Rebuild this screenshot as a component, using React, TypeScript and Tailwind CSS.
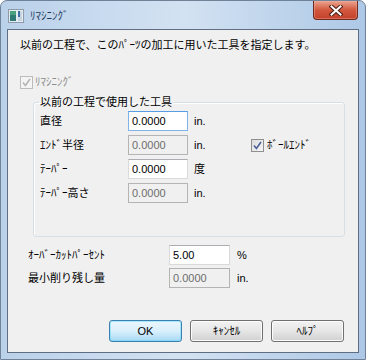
import React from "react";

const ui = "font-['Liberation_Sans','Noto_Sans_CJK_JP',sans-serif]";

function Check({ disabled = false }: { disabled?: boolean }) {
  return (
    <span
      className={`flex h-[13px] w-[13px] shrink-0 items-center justify-center border ${
        disabled ? "border-[#bcbcbc] bg-[#f4f4f4]" : "border-[#8e8f8f] bg-gradient-to-br from-[#dcdcdc] to-[#f6f6f6]"
      }`}
    >
      <svg width="9" height="9" viewBox="0 0 9 9">
        <path
          d="M1 4.6 L3.4 7.4 L8 1"
          fill="none"
          stroke={disabled ? "#b4b4b4" : "#4a5f97"}
          strokeWidth="1.6"
        />
      </svg>
    </span>
  );
}

function Field({ value, disabled = false, focused = false, w = "w-[60px]" }: { value: string; disabled?: boolean; focused?: boolean; w?: string }) {
  return (
    <div
      className={`flex h-[20px] ${w} items-center border px-[3px] text-[11px] ${
        disabled
          ? "border-[#b4b4b4] bg-[#f0f0f0] text-[#6d6d6d]"
          : focused
          ? "border-[#7eb4ea] border-t-[#569de5] bg-white text-black"
          : "border-[#dadada] border-t-[#abadb3] bg-white text-black"
      }`}
    >
      {value}
    </div>
  );
}

function Btn({ label, main = false }: { label: string; main?: boolean }) {
  return (
    <div
      className={`flex h-[22px] w-[73px] items-center justify-center rounded-[3px] border text-[11px] text-black ${
        main
          ? "border-[#3c7fb1] bg-gradient-to-b from-[#eaf6fd] via-[#d9f0fc] to-[#a7d9f5] shadow-[inset_0_0_0_1px_#48d8fb66]"
          : "border-[#707070] bg-gradient-to-b from-[#f2f2f2] via-[#e6e6e6] to-[#d0d0d0] shadow-[inset_0_0_0_1px_#fcfcfc]"
      }`}
    >
      {label}
    </div>
  );
}

const rows = [
  { label: "直径", value: "0.0000", unit: "in.", focused: true },
  { label: "ｴﾝﾄﾞ半径", value: "0.0000", unit: "in.", disabled: true, ball: true },
  { label: "ﾃｰﾊﾟｰ", value: "0.0000", unit: "度" },
  { label: "ﾃｰﾊﾟｰ高さ", value: "0.0000", unit: "in.", disabled: true },
];

export default function App() {
  return (
    <div className={`${ui} relative flex h-[360px] w-[366px] flex-col overflow-hidden rounded-t-[7px] border border-[#6f8298] bg-gradient-to-r from-[#bad1ea] via-[#d3e2f2] to-[#adc8e6] text-[11px] text-black`}>
      {/* title bar */}
      <div className="flex h-[28px] shrink-0 items-center pl-[7px]">
        <svg width="16" height="14" viewBox="0 0 16 14" className="mt-[2px]">
          <rect x="0.5" y="0.5" width="15" height="13" fill="#e4ebf1" stroke="#8d9aa8" />
          <rect x="2" y="2" width="6" height="10" fill="#2f7a74" />
          <rect x="2" y="2" width="6" height="4" fill="#4aa07c" />
          <rect x="10" y="2" width="4" height="10" fill="#c7d4e0" />
          <rect x="10" y="2" width="2" height="6" fill="#3b6ea5" />
        </svg>
        <span className="ml-[6px] mt-[2px] text-[11px] text-[#1e395b]">ﾘﾏｼﾆﾝｸﾞ</span>
      </div>

      {/* close button */}
      <div className="absolute right-[7px] top-0 flex h-[19px] w-[45px] items-center justify-center rounded-b-[4px] border border-t-0 border-[#6e2a1e] bg-gradient-to-b from-[#e9a38f] via-[#d2573d] to-[#c4402a] shadow-[inset_0_0_0_1px_#f0b7a866]">
        <svg width="14" height="11" viewBox="0 0 14 11">
          <path d="M2.5 1.5 L11.5 9.5 M11.5 1.5 L2.5 9.5" stroke="#4a1e16" strokeWidth="4" strokeLinecap="square" />
          <path d="M2.5 1.5 L11.5 9.5 M11.5 1.5 L2.5 9.5" stroke="#ffffff" strokeWidth="2" strokeLinecap="square" />
        </svg>
      </div>

      {/* client area */}
      <div className="mx-[6px] mb-[6px] flex flex-1 flex-col border border-[#5f6e80] bg-[#f0f0f0]">
        <div className="ml-[12px] mt-[7px] h-[16px] leading-[16px]">
          以前の工程で、このﾊﾟｰﾂの加工に用いた工具を指定します。
        </div>

        <div className="ml-[12px] mt-[21px] flex h-[16px] items-center gap-[2px] text-[#8d8d8d]">
          <Check disabled />
          <span>ﾘﾏｼﾆﾝｸﾞ</span>
        </div>

        <fieldset className="ml-[25px] mt-[4px] w-[312px] rounded-[3px] border border-[#d5dfe5] pb-[33px] pt-[1px] shadow-[inset_1px_1px_0_#ffffff]">
          <legend className="ml-[5px] px-[1px] leading-[16px]">以前の工程で使用した工具</legend>
          <div className="flex flex-col gap-[4px]">
            {rows.map((r) => (
              <div key={r.label} className="flex h-[20px] items-center">
                <span className="w-[94px] pl-[6px]">{r.label}</span>
                <Field value={r.value} disabled={r.disabled} focused={r.focused} />
                <span className="ml-[6px] w-[57px]">{r.unit}</span>
                {r.ball && (
                  <span className="flex items-center gap-[3px]">
                    <Check />
                    <span>ﾎﾞｰﾙｴﾝﾄﾞ</span>
                  </span>
                )}
              </div>
            ))}
          </div>
        </fieldset>

        <div className="ml-[20px] mt-[8px] flex flex-col gap-[3px]">
          <div className="flex h-[20px] items-center">
            <span className="w-[141px]">ｵｰﾊﾞｰｶｯﾄﾊﾟｰｾﾝﾄ</span>
            <Field value="5.00" w="w-[61px]" />
            <span className="ml-[7px]">%</span>
          </div>
          <div className="flex h-[20px] items-center">
            <span className="w-[141px]">最小削り残し量</span>
            <Field value="0.0000" disabled w="w-[61px]" />
            <span className="ml-[7px]">in.</span>
          </div>
        </div>

        <div className="mr-[14px] mt-[32px] flex justify-end gap-[8px]">
          <Btn label="OK" main />
          <Btn label="ｷｬﾝｾﾙ" />
          <Btn label="ﾍﾙﾌﾟ" />
        </div>
      </div>
    </div>
  );
}
